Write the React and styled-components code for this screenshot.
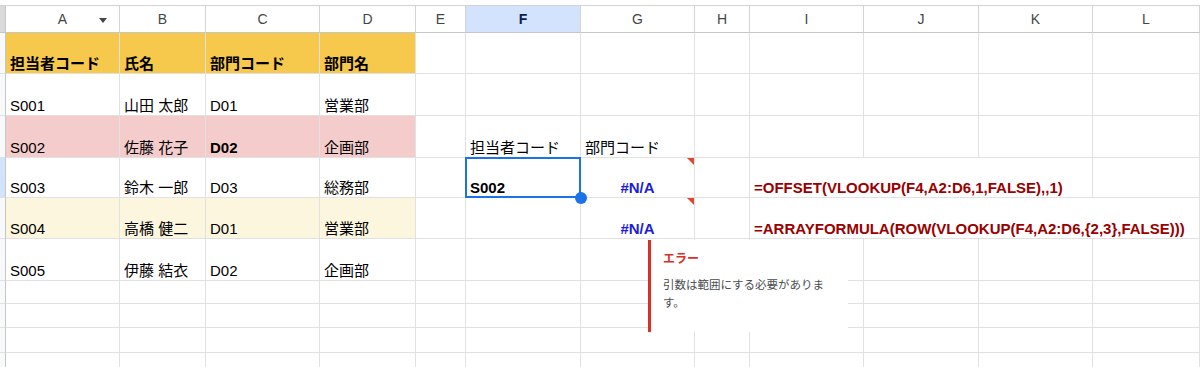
import React from "react";
import styled, { createGlobalStyle } from "styled-components";

const GlobalStyle = createGlobalStyle`
  html, body {
    margin: 0;
    padding: 0;
    background: #fff;
  }
  body {
    font-family: "Liberation Sans", "Noto Sans CJK JP", sans-serif;
    overflow: hidden;
  }
`;

const COLS = ["A", "B", "C", "D", "E", "F", "G", "H", "I", "J", "K", "L"];
const COL_WIDTHS = [6, 114, 86, 114, 96, 50, 115, 114, 55, 114, 115, 114, 107];
const ROW_HEIGHTS = [27, 41, 42, 42, 40, 41, 42, 23, 24, 25, 40];

const TONES = {
  head: "#f6c84c",
  pink: "#f4cccc",
  cream: "#fdf6df",
};

const head = (text) => ({ text, bold: true, tone: "head" });

// cell contents by row number, keyed by column letter
const DATA = {
  1: { A: head("担当者コード"), B: head("氏名"), C: head("部門コード"), D: head("部門名") },
  2: { A: { text: "S001" }, B: { text: "山田 太郎" }, C: { text: "D01" }, D: { text: "営業部" } },
  3: {
    A: { text: "S002", tone: "pink" },
    B: { text: "佐藤 花子", tone: "pink" },
    C: { text: "D02", tone: "pink", bold: true },
    D: { text: "企画部", tone: "pink" },
    F: { text: "担当者コード" },
    G: { text: "部門コード" },
  },
  4: {
    A: { text: "S003" },
    B: { text: "鈴木 一郎" },
    C: { text: "D03" },
    D: { text: "総務部" },
    F: { text: "S002", bold: true, selected: true },
    G: { text: "#N/A", bold: true, color: "#1c1cdc", align: "center", error: true },
    I: { text: "=OFFSET(VLOOKUP(F4,A2:D6,1,FALSE),,1)", bold: true, color: "#990000", span: 3 },
  },
  5: {
    A: { text: "S004", tone: "cream" },
    B: { text: "高橋 健二", tone: "cream" },
    C: { text: "D01", tone: "cream" },
    D: { text: "営業部", tone: "cream" },
    G: { text: "#N/A", bold: true, color: "#1c1cdc", align: "center", error: true },
    I: {
      text: "=ARRAYFORMULA(ROW(VLOOKUP(F4,A2:D6,{2,3},FALSE)))",
      bold: true,
      color: "#990000",
      span: 4,
    },
  },
  6: { A: { text: "S005" }, B: { text: "伊藤 結衣" }, C: { text: "D02" }, D: { text: "企画部" } },
};

function Spreadsheet() {
  const rows = [];
  for (let r = 1; r < ROW_HEIGHTS.length; r++) {
    const spec = DATA[r] || {};
    rows.push(<RowHead key={`rh${r}`} $active={r === 4} />);
    let skip = 0;
    COLS.forEach((col) => {
      if (skip > 0) {
        skip--;
        return;
      }
      const cell = spec[col] || {};
      if (cell.span) skip = cell.span - 1;
      rows.push(
        <Cell
          key={`${col}${r}`}
          $tone={cell.tone}
          $bold={cell.bold}
          $color={cell.color}
          $align={cell.align}
          $span={cell.span}
          $selected={cell.selected}
          $error={cell.error}
        >
          {cell.text}
          {cell.selected && <FillHandle />}
        </Cell>
      );
    });
  }

  return (
    <Page>
      <Grid>
        <Corner />
        {COLS.map((c) => (
          <ColHead key={c} $active={c === "F"}>
            {c}
            {c === "A" && <FilterArrow />}
          </ColHead>
        ))}
        {rows}
      </Grid>
      <ErrorTip>
        <ErrorTitle>エラー</ErrorTitle>
        <ErrorText>引数は範囲にする必要があります。</ErrorText>
      </ErrorTip>
    </Page>
  );
}

export default function App() {
  return (
    <>
      <GlobalStyle />
      <Spreadsheet />
    </>
  );
}

const Page = styled.div`
  position: relative;
  width: 1200px;
  height: 367px;
  padding-top: 5px;
  box-sizing: border-box;
  overflow: hidden;
  background: #fff;
`;

const Grid = styled.div`
  display: grid;
  grid-template-columns: ${COL_WIDTHS.map((w) => `${w}px`).join(" ")};
  grid-template-rows: ${ROW_HEIGHTS.map((h) => `${h}px`).join(" ")};
  border-top: 1px solid #d3d3d3;
`;

const Corner = styled.div`
  background: #dadada;
  border-right: 1px solid #c4c7c5;
  border-bottom: 1px solid #c4c7c5;
  box-sizing: border-box;
`;

const ColHead = styled.div`
  position: relative;
  display: flex;
  align-items: center;
  justify-content: center;
  box-sizing: border-box;
  border-right: 1px solid #d3d3d3;
  border-bottom: 1px solid #c4c7c5;
  background: ${(p) => (p.$active ? "#d3e3fd" : "#fff")};
  color: ${(p) => (p.$active ? "#0b1f4d" : "#444746")};
  font-weight: ${(p) => (p.$active ? 700 : 400)};
  font-size: 14px;
`;

const FilterArrow = styled.span`
  position: absolute;
  right: 12px;
  top: 12px;
  width: 0;
  height: 0;
  border-left: 4px solid transparent;
  border-right: 4px solid transparent;
  border-top: 5px solid #444746;
`;

const RowHead = styled.div`
  box-sizing: border-box;
  background: ${(p) => (p.$active ? "#d3e3fd" : "#f8f9fa")};
  border-right: 1px solid #c4c7c5;
  border-bottom: 1px solid #e1e1e1;
`;

const Cell = styled.div`
  position: relative;
  box-sizing: border-box;
  display: flex;
  align-items: flex-end;
  justify-content: ${(p) => (p.$align === "center" ? "center" : "flex-start")};
  grid-column: ${(p) => (p.$span ? `span ${p.$span}` : "auto")};
  padding: 0 4px 1px;
  border-right: 1px solid #e1e1e1;
  border-bottom: 1px solid #e1e1e1;
  background: ${(p) => (p.$tone ? TONES[p.$tone] : "transparent")};
  color: ${(p) => p.$color || "#000"};
  font-weight: ${(p) => (p.$bold ? 700 : 400)};
  font-size: 15px;
  line-height: 17px;
  white-space: nowrap;

  ${(p) =>
    p.$selected &&
    `
    &::after {
      content: "";
      position: absolute;
      top: -1px;
      left: -1px;
      right: -1px;
      bottom: -1px;
      border: 2px solid #1a73e8;
      pointer-events: none;
    }
  `}

  ${(p) =>
    p.$error &&
    `
    &::before {
      content: "";
      position: absolute;
      top: 0;
      right: 0;
      width: 0;
      height: 0;
      border-left: 7px solid transparent;
      border-top: 7px solid #e2452f;
    }
  `}
`;

const FillHandle = styled.span`
  position: absolute;
  right: -7px;
  bottom: -7px;
  width: 12px;
  height: 12px;
  border-radius: 50%;
  background: #1a73e8;
  z-index: 3;
`;

const ErrorTip = styled.div`
  position: absolute;
  left: 648px;
  top: 240px;
  width: 200px;
  height: 92px;
  box-sizing: border-box;
  background: #fff;
  border-left: 3px solid #d93025;
  padding: 10px 14px 0 12px;
  z-index: 5;
`;

const ErrorTitle = styled.div`
  color: #d93025;
  font-weight: 700;
  font-size: 12px;
  line-height: 18px;
  margin-bottom: 8px;
`;

const ErrorText = styled.div`
  width: 168px;
  color: #4a4d51;
  font-size: 11.5px;
  line-height: 18px;
`;
